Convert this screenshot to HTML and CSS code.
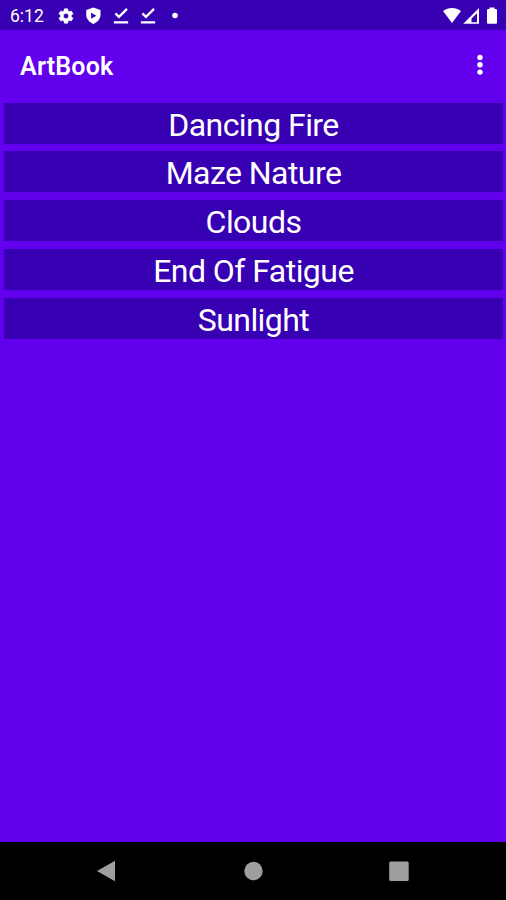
FILE: index.html
```html
<!DOCTYPE html>
<html lang="en">

<head>
    <meta charset="utf-8">
    <meta name="viewport" content="width=device-width, initial-scale=1.0">
    <title>ArtBook</title>
    <link rel="stylesheet" href="styles.css">
</head>

<body>
    <div class="status">
        <span class="time">6:12</span>
        <div class="notifications">
            <svg class="gear" width="18" height="18" viewBox="0 0 24 24">
                <path d="M19.14 12.94c.04-.3.06-.61.06-.94s-.02-.64-.07-.94l2.03-1.58c.18-.14.23-.41.12-.61l-1.92-3.32c-.12-.22-.37-.29-.59-.22l-2.39.96c-.5-.38-1.03-.7-1.62-.94l-.36-2.54c-.04-.24-.24-.41-.48-.41h-3.84c-.24 0-.43.17-.47.41l-.36 2.54c-.59.24-1.13.57-1.62.94l-2.39-.96c-.22-.08-.47 0-.59.22L2.74 8.87c-.12.21-.08.47.12.61l2.03 1.58c-.05.3-.09.63-.09.94s.02.64.07.94l-2.03 1.58c-.18.14-.23.41-.12.61l1.92 3.32c.12.22.37.29.59.22l2.39-.96c.5.38 1.03.7 1.62.94l.36 2.54c.05.24.24.41.48.41h3.84c.24 0 .44-.17.47-.41l.36-2.54c.59-.24 1.13-.56 1.62-.94l2.39.96c.22.08.47 0 .59-.22l1.92-3.32c.12-.22.07-.47-.12-.61zM12 15.6a3.6 3.6 0 1 1 0-7.2 3.6 3.6 0 0 1 0 7.2z" />
            </svg>
            <svg width="18" height="18" viewBox="0 0 24 24">
                <path fill-rule="evenodd" d="M12.500 .5L3 4v6.500c0 5.300 4 9.500 9.500 12 5.500-2.500 9.500-6.700 9.500-12V4zM9.500 7.500L16.500 11.500l-7 4z" />
            </svg>
            <svg width="18" height="18" viewBox="0 0 24 24">
                <path class="line" d="M4.500 8.500l4.800 4.700L20 2.500M2.500 20.500h19" />
            </svg>
            <svg width="18" height="18" viewBox="0 0 24 24">
                <path class="line" d="M4.500 8.500l4.800 4.700L20 2.500M2.500 20.500h19" />
            </svg>
            <svg width="18" height="18" viewBox="0 0 24 24">
                <circle cx="12" cy="11.300" r="3.700" />
            </svg>
        </div>
        <svg class="system" width="56" height="18" viewBox="0 0 56 18">
            <path d="M1 4C6 0 14 0 19 4L10 16z" />
            <path fill-rule="evenodd" d="M37 1v15.700H21.300zM35 6.300l-5.500 5.200v3.700H35z" />
            <path d="M47.500 2V.5h5V2H54q1 0 1 1v12.700q0 1-1 1h-8q-1 0-1-1V3q0-1 1-1z" />
        </svg>
    </div>

    <header>
        <h1>ArtBook</h1>
        <svg class="more" width="8" height="24" viewBox="0 0 8 24">
            <circle cx="4" cy="4.500" r="2.700" />
            <circle cx="4" cy="11.800" r="2.700" />
            <circle cx="4" cy="19.100" r="2.700" />
        </svg>
    </header>

    <main>
        <div class="art">Dancing Fire</div>
        <div class="art">Maze Nature</div>
        <div class="art">Clouds</div>
        <div class="art">End Of Fatigue</div>
        <div class="art">Sunlight</div>
    </main>

    <nav>
        <svg width="22" height="22" viewBox="0 0 22 22">
            <path d="M20 .8v20.400L2 11z" />
        </svg>
        <svg width="22" height="22" viewBox="0 0 22 22">
            <circle cx="11.500" cy="11" r="9.200" />
        </svg>
        <svg width="22" height="22" viewBox="0 0 22 22">
            <rect x="1.200" y="1.500" width="19.500" height="19.500" rx="1.500" />
        </svg>
    </nav>
</body>

</html>
```
FILE: styles.css
```css
* {
    box-sizing: border-box;
}

body {
    margin: 0;
    height: 100vh;
    display: flex;
    flex-direction: column;
    font-family: Roboto, sans-serif;
    color: white;
    background: #6200ee;
}

svg {
    display: block;
    fill: white;
}

.status {
    height: 30px;
    display: flex;
    align-items: center;
    padding: 1px 8px 0 10px;
    background: #3700b3;
}

.time {
    width: 47px;
    font-size: 17.5px;
}

.notifications {
    display: flex;
    gap: 9.300px;
}

.gear {
    stroke: white;
    stroke-width: .8;
}

.line {
    fill: none;
    stroke: white;
    stroke-width: 3;
}

.system {
    margin-left: auto;
}

header {
    height: 72.700px;
    display: flex;
    justify-content: space-between;
    align-items: center;
    padding: 0 22.500px 2px 20px;
}

h1 {
    margin: 2px 0 0;
    font-size: 25px;
    font-weight: 600;
    letter-spacing: .2px;
}

main {
    flex: 1;
    display: flex;
    flex-direction: column;
    gap: 7.800px;
    padding: 0 3px 0 4px;
}

.art {
    height: 41px;
    line-height: 44px;
    font-size: 32px;
    letter-spacing: -.55px;
    text-align: center;
    background: #3700b3;
}

nav {
    height: 58px;
    display: flex;
    justify-content: space-between;
    align-items: center;
    padding: 0 96px 0 95px;
    background: black;
}

nav svg {
    fill: #9e9e9e;
}
```
